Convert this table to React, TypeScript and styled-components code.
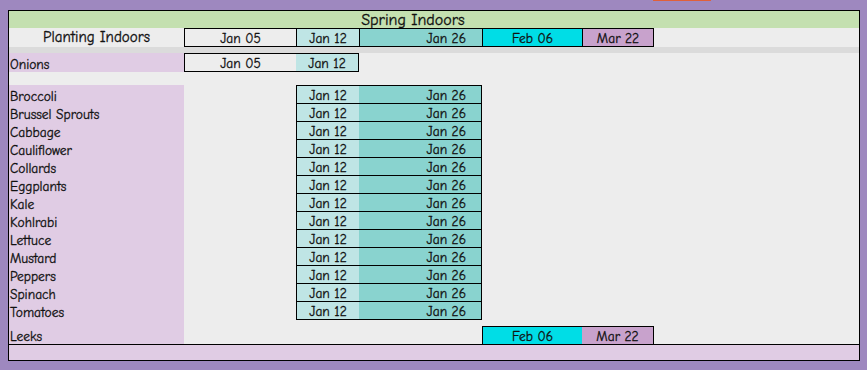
import styled, { createGlobalStyle } from "styled-components";

const GlobalStyle = createGlobalStyle`
  html, body {
    margin: 0;
    padding: 0;
    background: #9e88bf;
  }
  body {
    font-family: "Comic Sans MS", "Comic Neue", "Noto Sans", sans-serif;
    color: #111;
    -webkit-text-stroke: 0.3px #111;
  }
`;

const COLS = "175px 112px 63px 123px 100px 72px 1fr";

const Page = styled.div`
  width: 867px;
  height: 370px;
  box-sizing: border-box;
  padding: 0 7px 0 8px;
  display: flex;
  flex-direction: column;
`;

const TopStrip = styled.div`
  height: 1px;
  margin-bottom: 9px;
  display: flex;
  span {
    margin-left: 645px;
    width: 58px;
    background: #e0603a;
  }
`;

const Sheet = styled.div`
  width: 852px;
  height: 351px;
  box-sizing: border-box;
  border: 1px solid #000;
  background: #ededed;
  display: flex;
  flex-direction: column;
`;

const Title = styled.div`
  height: 17px;
  background: #c4e0b0;
  font-size: 16px;
  line-height: 18px;
  text-align: center;
  padding-right: 42px;
`;

const Row = styled.div<{ $h: number }>`
  height: ${({ $h }) => $h}px;
  display: grid;
  grid-template-columns: ${COLS};
  box-sizing: border-box;
`;

const Gap = styled.div<{ $h: number; $label?: boolean }>`
  height: ${({ $h }) => $h}px;
  display: grid;
  grid-template-columns: ${COLS};
  &::before {
    content: "";
    background: ${({ $label }) => ($label ? "#e0cce4" : "transparent")};
  }
`;

const Separator = styled.div`
  height: 6px;
  background: #dbdbdb;
`;

const HeadLabel = styled.div`
  font-size: 15px;
  line-height: 19px;
  text-align: center;
`;

const Label = styled.div`
  background: #e0cce4;
  font-size: 13.5px;
  display: flex;
  align-items: flex-end;
  padding: 0 0 0 1px;
  line-height: 15px;
  white-space: nowrap;
`;

const Cell = styled.div<{ $bg: string; $align?: "center" | "right"; $last?: boolean }>`
  box-sizing: border-box;
  background: ${({ $bg }) => $bg};
  border-top: 1px solid #000;
  border-bottom: 1px solid #000;
  border-left: 1px solid #000;
  border-right: ${({ $last }) => ($last ? "1px solid #000" : "none")};
  font-size: 13.5px;
  display: flex;
  align-items: flex-end;
  justify-content: ${({ $align }) => ($align === "right" ? "flex-end" : "center")};
  padding: 0 ${({ $align }) => ($align === "right" ? "16px" : "0")} 0 0;
  line-height: 15px;
`;

const Box = styled.div<{ $span: string; $top?: boolean; $bottom?: boolean }>`
  grid-column: ${({ $span }) => $span};
  box-sizing: border-box;
  display: grid;
  border-left: 1px solid #000;
  border-right: 1px solid #000;
  border-top: ${({ $top }) => ($top ? "1px solid #000" : "none")};
  border-bottom: ${({ $bottom }) => ($bottom ? "1px solid #000" : "none")};
`;

const Part = styled.div<{ $bg: string; $align?: "center" | "right" }>`
  background: ${({ $bg }) => $bg};
  font-size: 13.5px;
  display: flex;
  align-items: flex-end;
  justify-content: ${({ $align }) => ($align === "right" ? "flex-end" : "center")};
  padding: 0 ${({ $align }) => ($align === "right" ? "15px" : "0")} 0 0;
  line-height: 15px;
`;

const Footer = styled.div`
  height: 16px;
  box-sizing: border-box;
  border-top: 1px solid #000;
  background: #e0cce4;
`;

const C = {
  plain: "#ededed",
  pale: "#bfe5e5",
  teal: "#89d3cf",
  cyan: "#00dde6",
  mauve: "#c8a2cc",
};

const veggies = [
  "Broccoli",
  "Brussel Sprouts",
  "Cabbage",
  "Cauliflower",
  "Collards",
  "Eggplants",
  "Kale",
  "Kohlrabi",
  "Lettuce",
  "Mustard",
  "Peppers",
  "Spinach",
  "Tomatoes",
];

export default function App() {
  return (
    <>
      <GlobalStyle />
      <Page>
        <TopStrip>
          <span />
        </TopStrip>
        <Sheet>
          <Title>Spring Indoors</Title>
          <Row $h={19}>
            <HeadLabel>Planting Indoors</HeadLabel>
            <Cell $bg={C.plain}>Jan 05</Cell>
            <Cell $bg={C.pale}>Jan 12</Cell>
            <Cell $bg={C.teal} $align="right">Jan 26</Cell>
            <Cell $bg={C.cyan}>Feb 06</Cell>
            <Cell $bg={C.mauve} $last>Mar 22</Cell>
          </Row>
          <Separator />
          <Row $h={19}>
            <Label>Onions</Label>
            <Box $span="2 / 4" $top $bottom style={{ gridTemplateColumns: "111px 1fr" }}>
              <Part $bg={C.plain}>Jan 05</Part>
              <Part $bg={C.pale}>Jan 12</Part>
            </Box>
          </Row>
          <Gap $h={13} />
          {veggies.map((v, i) => (
            <Row key={v} $h={i === 0 ? 19 : 18}>
              <Label>{v}</Label>
              <div />
              <Box $span="3 / 5" $top={i === 0} $bottom style={{ gridTemplateColumns: "62px 1fr" }}>
                <Part $bg={C.pale}>Jan 12</Part>
                <Part $bg={C.teal} $align="right">Jan 26</Part>
              </Box>
            </Row>
          ))}
          <Gap $h={6} $label />
          <Row $h={18}>
            <Label>Leeks</Label>
            <div />
            <div />
            <div />
            <Box $span="5 / 7" $top style={{ gridTemplateColumns: "99px 1fr" }}>
              <Part $bg={C.cyan}>Feb 06</Part>
              <Part $bg={C.mauve}>Mar 22</Part>
            </Box>
          </Row>
          <Footer />
        </Sheet>
      </Page>
    </>
  );
}
